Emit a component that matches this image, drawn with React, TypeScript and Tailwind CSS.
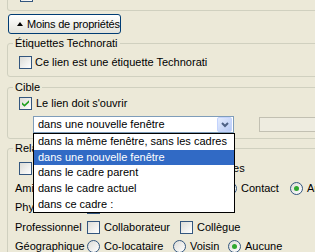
import React from "react";

function Checkbox({ checked = false }: { checked?: boolean }) {
  return (
    <span className="w-[13px] h-[13px] shrink-0 border border-[#33567E] bg-gradient-to-br from-[#DCDCD7] to-white flex items-center justify-center">
      {checked && (
        <svg width="7" height="7" viewBox="0 0 7 7">
          <path d="M0 2.2 L2.5 4.6 L7 0.2 L7 2.4 L2.5 6.8 L0 4.4 Z" fill="#21A121" />
        </svg>
      )}
    </span>
  );
}

function Radio({ checked = false }: { checked?: boolean }) {
  return (
    <span className="w-[13px] h-[13px] shrink-0 rounded-full border border-[#33567E] bg-gradient-to-br from-[#DCDCD7] to-white flex items-center justify-center">
      {checked && <span className="w-[5px] h-[5px] rounded-full bg-[#2FA82F]" />}
    </span>
  );
}

function Item({ kind, checked, label, w }: { kind: "c" | "r"; checked?: boolean; label: string; w?: string }) {
  return (
    <span className={`flex items-center gap-[4px] shrink-0 ${w ?? ""}`}>
      {kind === "c" ? <Checkbox checked={checked} /> : <Radio checked={checked} />}
      <span className="whitespace-nowrap">{label}</span>
    </span>
  );
}

const options = [
  "dans la même fenêtre, sans les cadres",
  "dans une nouvelle fenêtre",
  "dans le cadre parent",
  "dans le cadre actuel",
  "dans ce cadre :",
];

export default function App() {
  return (
    <div className="w-[315px] h-[252px] overflow-hidden bg-[#ECE9D8] text-[11px] leading-[13px] text-black font-['Liberation_Sans',Arial,sans-serif]">
      <div className="w-[345px] pl-[7px]">
        {/* remnant of group above */}
        <div className="h-[11px] border-x border-b border-[#D0D0BF] rounded-b-[3px] flex items-end pl-[12px] pb-[8px] overflow-hidden">
          <Checkbox />
        </div>

        {/* toggle button */}
        <button className="mt-[3px] ml-[1px] h-[20px] w-[113px] border border-[#003C74] rounded-[3px] bg-gradient-to-b from-white to-[#E3E3DB] flex items-center pl-[8px] gap-[4px] whitespace-nowrap overflow-hidden">
          <svg width="6" height="4" viewBox="0 0 6 4" className="shrink-0">
            <path d="M3 0 L6 4 L0 4 Z" fill="#000" />
          </svg>
          <span className="tracking-[-0.2px]">Moins de propriétés</span>
        </button>

        {/* Étiquettes Technorati */}
        <fieldset className="mt-[3px] border border-[#D0D0BF] rounded-[3px] pl-[5px] pt-[6px] pb-[7px]">
          <legend className="px-[2px]">Étiquettes Technorati</legend>
          <label className="flex items-center ml-[6px] gap-[3px] h-[13px]">
            <Checkbox />
            <span>Ce lien est une étiquette Technorati</span>
          </label>
        </fieldset>

        {/* Cible */}
        <fieldset className="mt-[4px] border border-[#D0D0BF] rounded-[3px] pl-[5px] pt-[3px] pb-[5px]">
          <legend className="px-[2px]">Cible</legend>
          <label className="flex items-center ml-[6px] gap-[4px] h-[13px]">
            <Checkbox checked />
            <span>Le lien doit s'ouvrir</span>
          </label>
          <div className="mt-[6px] ml-[20px] flex items-center">
            <div className="relative z-10">
              <div className="w-[201px] h-[17px] border border-[#7F9DB9] bg-white flex items-center pl-[4px] pr-[1px]">
                <span className="flex-1 whitespace-nowrap">dans une nouvelle fenêtre</span>
                <span className="w-[15px] h-[15px] rounded-[2px] border border-[#C3D3FD] bg-gradient-to-br from-[#E4ECFE] to-[#B7CAF5] flex items-center justify-center">
                  <svg width="8" height="6" viewBox="0 0 8 6">
                    <path d="M1 1 L4 4 L7 1" stroke="#4D6185" strokeWidth="2" fill="none" />
                  </svg>
                </span>
              </div>
              <ul className="absolute left-0 top-full w-[202px] h-[80px] border border-black bg-white flex flex-col">
                {options.map((o, i) => (
                  <li
                    key={o}
                    className={`flex-1 flex items-center pl-[4px] whitespace-nowrap ${i === 1 ? "bg-[#316AC5] text-white" : ""}`}
                  >
                    {o}
                  </li>
                ))}
              </ul>
            </div>
            <div className="ml-[25px] w-[80px] h-[15px] border border-[#C2C0B2] bg-[#EEECE0]" />
          </div>
        </fieldset>

        {/* Relations */}
        <fieldset className="mt-[3px] border border-[#D0D0BF] rounded-[3px] pl-[5px] pt-[4px] pb-[6px]">
          <legend className="px-[2px]">Relations (XFN)</legend>
          <div className="flex flex-col">
            <div className="h-[19.5px] flex items-center ml-[6px] gap-[3px]">
              <Checkbox />
              <span className="whitespace-nowrap">Moi-même : une autre parmi mes adresses</span>
            </div>
            <div className="h-[19.5px] flex items-center ml-[2px]">
              <span className="w-[72px] shrink-0">Amitié</span>
              <Item kind="r" label="Ami" w="w-[52px]" />
              <Item kind="r" label="Connaissance" w="w-[85px]" />
              <Item kind="r" label="Contact" w="w-[66px]" />
              <Item kind="r" label="Aucune" checked />
            </div>
            <div className="h-[19.5px] flex items-center ml-[2px]">
              <span className="w-[72px] shrink-0">Physique</span>
              <Item kind="c" label="Rencontré" />
            </div>
            <div className="h-[19.5px] flex items-center ml-[2px]">
              <span className="w-[72px] shrink-0">Professionnel</span>
              <Item kind="c" label="Collaborateur" w="w-[93px]" />
              <Item kind="c" label="Collègue" />
            </div>
            <div className="h-[19.5px] flex items-center ml-[2px]">
              <span className="w-[72px] shrink-0">Géographique</span>
              <Item kind="r" label="Co-locataire" w="w-[86px]" />
              <Item kind="r" label="Voisin" w="w-[55px]" />
              <Item kind="r" label="Aucune" checked />
            </div>
          </div>
        </fieldset>
      </div>
    </div>
  );
}
